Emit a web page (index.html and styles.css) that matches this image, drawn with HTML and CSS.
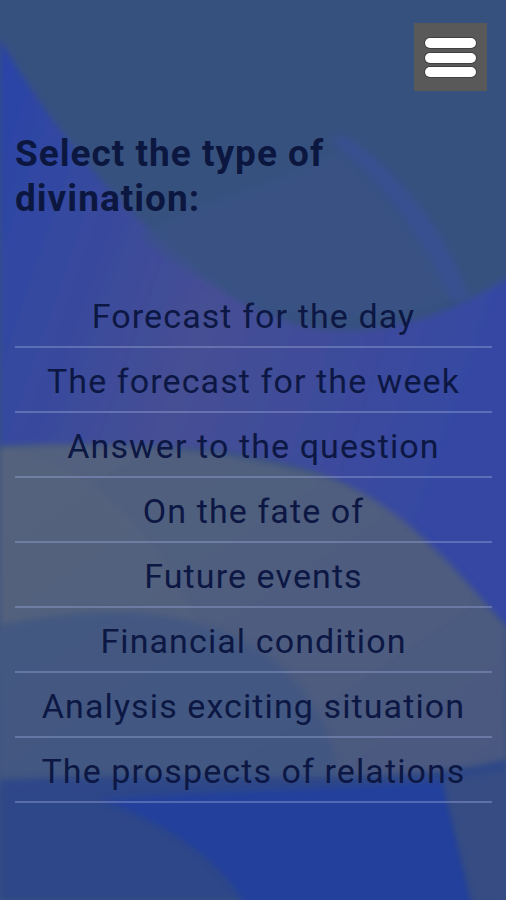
FILE: index.html
```html
<!DOCTYPE html>
<html lang="en">
<head>
<meta charset="utf-8">
<title>Divination</title>
<link rel="stylesheet" href="styles.css">
</head>
<body>
<div class="screen">
  <svg class="backdrop" viewBox="0 0 506 900" preserveAspectRatio="none" aria-hidden="true">
    <defs>
      <linearGradient id="band" x1="0" y1="0" x2="1" y2="0.4">
        <stop offset="0" stop-color="#2843a8"/>
        <stop offset="0.5" stop-color="#464f94"/>
        <stop offset="1" stop-color="#3547a3"/>
      </linearGradient>
      <linearGradient id="low" x1="0" y1="0" x2="1" y2="1">
        <stop offset="0" stop-color="#53617e"/>
        <stop offset="1" stop-color="#4a5880"/>
      </linearGradient>
      <filter id="soft"><feGaussianBlur stdDeviation="3"/></filter>
    </defs>
    <rect width="506" height="900" fill="#37517f"/>
    <path filter="url(#soft)" fill="url(#band)" d="M0,40 C40,105 110,215 240,300 C330,355 430,330 520,270 L520,640 C440,565 380,500 320,475 C230,440 120,445 0,447 Z"/>
    <path filter="url(#soft)" fill="#3a5286" opacity="0.6" d="M140,235 C200,200 300,180 340,150 C400,210 440,260 450,300 C380,330 300,320 240,300 C190,275 160,255 140,235 Z"/>
    <path filter="url(#soft)" fill="#3b4fa0" opacity="0.5" d="M330,140 C390,190 430,250 450,300 L470,300 C450,240 410,180 345,135 Z"/>
    <path filter="url(#soft)" fill="url(#low)" d="M0,447 C120,440 230,450 320,475 C390,495 450,560 506,628 L506,760 C400,790 250,770 0,780 Z"/>
    <path filter="url(#soft)" fill="#5a667d" opacity="0.35" d="M0,450 C90,455 160,540 200,625 C120,610 60,615 0,625 Z"/>
    <path filter="url(#soft)" fill="#3d5583" d="M0,625 C80,610 160,600 240,640 C300,670 330,720 340,780 L0,790 Z" opacity="0.65"/>
    <path filter="url(#soft)" fill="#2d4788" d="M0,780 C200,770 400,790 506,760 L506,900 L0,900 Z"/>
    <path filter="url(#soft)" fill="#24409c" d="M100,800 C170,825 220,860 245,905 L472,905 L443,780 C340,790 220,790 100,800 Z"/>
    <path filter="url(#soft)" fill="#3a5080" opacity="0.7" d="M443,780 L506,770 L506,900 L472,900 Z"/>
  </svg>

  <header class="topbar">
    <button class="menu-btn" type="button" aria-label="Menu">
      <svg viewBox="0 0 73 68" width="73" height="68">
        <g stroke="#404040" stroke-width="12" stroke-linecap="round">
          <line x1="16" y1="20" x2="57" y2="20"/>
          <line x1="16" y1="35" x2="57" y2="35"/>
          <line x1="16" y1="49" x2="57" y2="49"/>
        </g>
        <g stroke="#ffffff" stroke-width="10" stroke-linecap="round">
          <line x1="16" y1="20" x2="57" y2="20"/>
          <line x1="16" y1="35" x2="57" y2="35"/>
          <line x1="16" y1="49" x2="57" y2="49"/>
        </g>
      </svg>
    </button>
  </header>

  <h1 class="title">Select the type of<br>divination:</h1>

  <ul class="options">
    <li class="option">Forecast for the day</li>
    <li class="option">The forecast for the week</li>
    <li class="option">Answer to the question</li>
    <li class="option">On the fate of</li>
    <li class="option">Future events</li>
    <li class="option">Financial condition</li>
    <li class="option">Analysis exciting situation</li>
    <li class="option">The prospects of relations</li>
  </ul>
</div>
</body>
</html>
```

FILE: styles.css
```css
html, body {
  margin: 0;
  padding: 0;
  height: 100%;
  background: #37517f;
}

.screen {
  position: relative;
  width: 506px;
  height: 900px;
  overflow: hidden;
  font-family: Roboto, "Liberation Sans", sans-serif;
  color: #0c1743;
}

.backdrop {
  position: absolute;
  left: 0;
  top: 0;
  width: 506px;
  height: 900px;
  z-index: 0;
}

.topbar {
  position: relative;
  z-index: 1;
  display: flex;
  justify-content: flex-end;
  padding: 23px 19px 0 0;
}

.menu-btn {
  width: 73px;
  height: 68px;
  padding: 0;
  border: none;
  background: #595959;
  display: block;
}

.menu-btn svg {
  display: block;
}

.title {
  position: relative;
  z-index: 1;
  margin: 40px 0 0 15px;
  font-size: 37px;
  line-height: 45px;
  font-weight: 700;
  letter-spacing: 1px;
  color: #0c1740;
}

.options {
  position: relative;
  z-index: 1;
  list-style: none;
  margin: 62px 14px 0 15px;
  padding: 0;
}

.option {
  display: flex;
  align-items: center;
  justify-content: center;
  height: 65px;
  padding-top: 3px;
  box-sizing: border-box;
  border-bottom: 2px solid rgba(150, 165, 215, 0.42);
  font-size: 34px;
  letter-spacing: 1.1px;
  font-weight: 400;
}
```
